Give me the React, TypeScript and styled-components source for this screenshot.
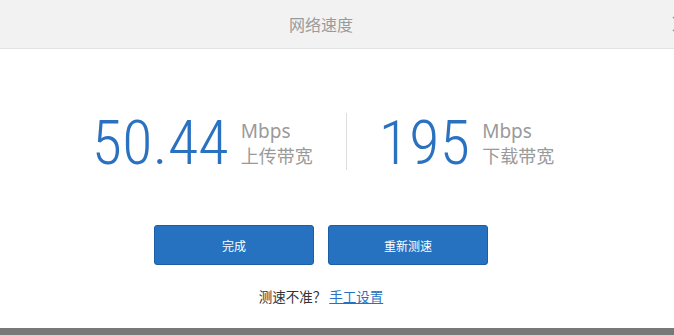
import React from "react";
import styled, { createGlobalStyle } from "styled-components";

const GlobalStyle = createGlobalStyle`
  html, body {
    margin: 0;
    padding: 0;
    background: #ffffff;
    overflow: hidden;
  }
  body {
    font-family: "Liberation Sans", "Noto Sans CJK SC", sans-serif;
  }
`;

const Page = styled.div`
  position: relative;
  width: 674px;
  height: 335px;
  display: flex;
  flex-direction: column;
  overflow: hidden;
`;

const Header = styled.header`
  height: 48px;
  flex: none;
  background: #f2f2f2;
  border-bottom: 1px solid #e3e3e3;
  display: flex;
  align-items: center;
`;

const Title = styled.h1`
  width: 642px;
  margin: 0;
  text-align: center;
  font-family: "Noto Sans CJK SC", sans-serif;
  font-weight: 400;
  font-size: 16px;
  line-height: 20px;
  color: #9a9a9a;
`;

const Close = styled.button`
  position: absolute;
  top: 16px;
  left: 672px;
  width: 16px;
  height: 16px;
  padding: 0;
  border: none;
  background: transparent;
  display: flex;
`;

const Content = styled.main`
  width: 642px;
  flex: 1;
  display: flex;
  flex-direction: column;
  align-items: center;
  padding-top: 64px;
  box-sizing: border-box;
`;

const Stats = styled.div`
  display: flex;
  align-items: center;
  height: 57px;
  margin-left: 4px;
`;

const Stat = styled.div`
  display: flex;
  align-items: center;
`;

const Value = styled.span`
  font-family: "Roboto Condensed", "DejaVu Sans Condensed", sans-serif;
  font-weight: 300;
  font-size: 62px;
  line-height: 60px;
  letter-spacing: 0.3px;
  color: #2a72c0;
  margin-right: 12px;
  margin-top: 2px;
`;

const Unit = styled.div`
  display: flex;
  flex-direction: column;
  color: #9a9a9a;
  margin-top: 2px;
`;

const UnitName = styled.span`
  font-family: "Noto Sans", "Liberation Sans", sans-serif;
  font-size: 19px;
  line-height: 24px;
`;

const UnitLabel = styled.span`
  font-family: "Noto Sans CJK SC", sans-serif;
  font-size: 18px;
  line-height: 24px;
`;

const Divider = styled.div`
  width: 1px;
  height: 57px;
  background: #dddddd;
  margin: 0 32px 0 33px;
`;

const Buttons = styled.div`
  display: flex;
  gap: 14px;
  margin-top: 55px;
`;

const Button = styled.button`
  width: 160px;
  height: 40px;
  box-sizing: border-box;
  background: #2672c0;
  border: 1px solid #1b5ea6;
  border-radius: 3px;
  color: #ffffff;
  font-family: "Noto Sans CJK SC", sans-serif;
  font-size: 12px;
  padding: 0;
  cursor: pointer;
`;

const Hint = styled.p`
  margin: 22px 0 0;
  font-family: "Noto Sans CJK SC", sans-serif;
  font-size: 13.5px;
  line-height: 18px;
  color: #333333;
`;

const Link = styled.a`
  color: #2672c0;
  text-decoration: underline;
  margin-left: 3px;
`;

const BottomBar = styled.div`
  height: 7px;
  flex: none;
  background: #787878;
`;

const stats = [
  { value: "50.44", label: "上传带宽" },
  { value: "195", label: "下载带宽" },
];

export default function App() {
  return (
    <>
      <GlobalStyle />
      <Page>
        <Header>
          <Title>网络速度</Title>
        </Header>
        <Close aria-label="关闭">
          <svg width="16" height="16" viewBox="0 0 16 16">
            <path d="M1 1 L15 15 M15 1 L1 15" stroke="#999" strokeWidth="1.5" />
          </svg>
        </Close>
        <Content>
          <Stats>
            {stats.map((s, i) => (
              <React.Fragment key={s.label}>
                {i > 0 && <Divider />}
                <Stat>
                  <Value>{s.value}</Value>
                  <Unit>
                    <UnitName>Mbps</UnitName>
                    <UnitLabel>{s.label}</UnitLabel>
                  </Unit>
                </Stat>
              </React.Fragment>
            ))}
          </Stats>
          <Buttons>
            <Button>完成</Button>
            <Button>重新测速</Button>
          </Buttons>
          <Hint>
            测速不准？<Link href="#">手工设置</Link>
          </Hint>
        </Content>
        <BottomBar />
      </Page>
    </>
  );
}
